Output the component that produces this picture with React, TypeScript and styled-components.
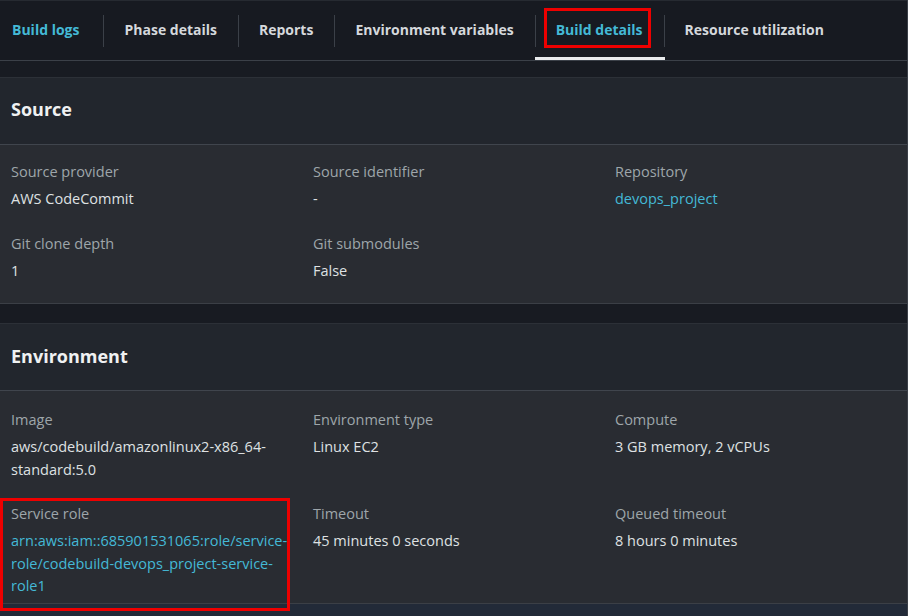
import React from "react";
import styled, { createGlobalStyle } from "styled-components";

const Global = createGlobalStyle`
  html, body { margin: 0; padding: 0; background: #222a38; }
  body { font-family: "Open Sans", "Noto Sans", sans-serif; -webkit-font-smoothing: antialiased; }
  #root { width: 908px; height: 616px; overflow: hidden; }
`;

const Page = styled.div`
  width: 908px;
  height: 616px;
  background: #222a38;
  box-sizing: border-box;
  border-right: 1px solid #3a3f47;
  overflow: hidden;
`;

const Top = styled.div`
  background: #171a21;
`;

const TabBar = styled.nav`
  display: flex;
  align-items: stretch;
  border-bottom: 1px solid #3b4048;
  border-top: 1px solid #262a31;
  box-sizing: border-box;
  height: 61px;
`;

const Tab = styled.div<{ $active?: boolean; $first?: boolean }>`
  position: relative;
  display: flex;
  align-items: center;
  padding: 0 ${(p) => (p.$first ? "24px" : "21px")} 2px ${(p) => (p.$first ? "12px" : "21px")};
  font-size: 14px;
  font-weight: 700;
  line-height: 20px;
  color: ${(p) => (p.$active ? "#44b9d6" : "#d5d8dc")};
  white-space: nowrap;
  &::before {
    content: ${(p) => (p.$first ? "none" : "''")};
    position: absolute;
    left: 0;
    top: 14px;
    height: 32px;
    width: 1px;
    background: #3b4048;
  }
  &::after {
    content: ${(p) => (p.$active ? "''" : "none")};
    position: absolute;
    left: 0;
    right: -1px;
    bottom: 0;
    height: 3px;
    background: #e9ebed;
  }
`;

const Marked = styled.span`
  display: inline-block;
  padding: 9px 5px 5px 9px;
  margin: -12px -8px -8px -12px;
  border: 3px solid #ee0000;
`;

const Gap = styled.div<{ $h: number }>`
  height: ${(p) => p.$h}px;
  background: #181b22;
`;

const Section = styled.section`
  border-top: 1px solid #2c3037;
`;

const Header = styled.header<{ $pb: number }>`
  height: 67px;
  display: flex;
  align-items: center;
  padding: 0 11px ${(p) => p.$pb}px;
  box-sizing: border-box;
  background: #22262d;
  border-bottom: 1px solid #40454d;
`;

const Title = styled.h2`
  margin: 0;
  font-size: 18px;
  font-weight: 700;
  color: #f0f1f2;
  line-height: 24px;
`;

const Body = styled.div<{ $pt: number; $pb: number }>`
  display: grid;
  grid-template-columns: repeat(3, 1fr);
  column-gap: 21px;
  row-gap: 22px;
  padding: ${(p) => p.$pt}px 11px ${(p) => p.$pb}px;
  background: #292c32;
  border-bottom: 1px solid #3b3f46;
`;

const Field = styled.div<{ $marked?: boolean }>`
  position: relative;
  min-width: 0;
  &::after {
    content: ${(p) => (p.$marked ? "''" : "none")};
    position: absolute;
    left: -11px;
    right: 2px;
    top: -5px;
    bottom: -13px;
    border: 3px solid #ee0000;
    pointer-events: none;
  }
`;

const Label = styled.div`
  font-size: 14.5px;
  line-height: 22px;
  color: #9ea6aa;
  margin-bottom: 5px;
`;

const Value = styled.div<{ $link?: boolean }>`
  font-size: 14.5px;
  line-height: 22.5px;
  color: ${(p) => (p.$link ? "#44b9d6" : "#dfe1e3")};
  overflow-wrap: break-word;
`;

const FirstTabText = styled.span`
  color: #44b9d6;
`;

type F = { label: string; value: string; link?: boolean; marked?: boolean };

const source: F[] = [
  { label: "Source provider", value: "AWS CodeCommit" },
  { label: "Source identifier", value: "-" },
  { label: "Repository", value: "devops_project", link: true },
  { label: "Git clone depth", value: "1" },
  { label: "Git submodules", value: "False" },
];

const env: F[] = [
  { label: "Image", value: "aws/codebuild/amazonlinux2-x86_64-standard:5.0" },
  { label: "Environment type", value: "Linux EC2" },
  { label: "Compute", value: "3 GB memory, 2 vCPUs" },
  {
    label: "Service role",
    value: "arn:aws:iam::685901531065:role/service-role/codebuild-devops_project-service-role1",
    link: true,
    marked: true,
  },
  { label: "Timeout", value: "45 minutes 0 seconds" },
  { label: "Queued timeout", value: "8 hours 0 minutes" },
];

const tabs = [
  "Build logs",
  "Phase details",
  "Reports",
  "Environment variables",
  "Build details",
  "Resource utilization",
];

function Fields({ items }: { items: F[] }) {
  return (
    <>
      {items.map((f) => (
        <Field key={f.label} $marked={f.marked}>
          <Label>{f.label}</Label>
          <Value $link={f.link}>{f.value}</Value>
        </Field>
      ))}
    </>
  );
}

export default function App() {
  return (
    <Page>
      <Global />
      <Top>
        <TabBar>
          {tabs.map((t, i) => (
            <Tab key={t} $first={i === 0} $active={i === 4}>
              {i === 0 ? (
                <FirstTabText>{t}</FirstTabText>
              ) : i === 4 ? (
                <Marked>{t}</Marked>
              ) : (
                t
              )}
            </Tab>
          ))}
        </TabBar>
      </Top>
      <Gap $h={16} />
      <Section>
        <Header $pb={5}>
          <Title>Source</Title>
        </Header>
        <Body $pt={16} $pb={21}>
          <Fields items={source} />
        </Body>
      </Section>
      <Gap $h={19} />
      <Section>
        <Header $pb={3}>
          <Title>Environment</Title>
        </Header>
        <Body $pt={18} $pb={5}>
          <Fields items={env} />
        </Body>
      </Section>
    </Page>
  );
}
